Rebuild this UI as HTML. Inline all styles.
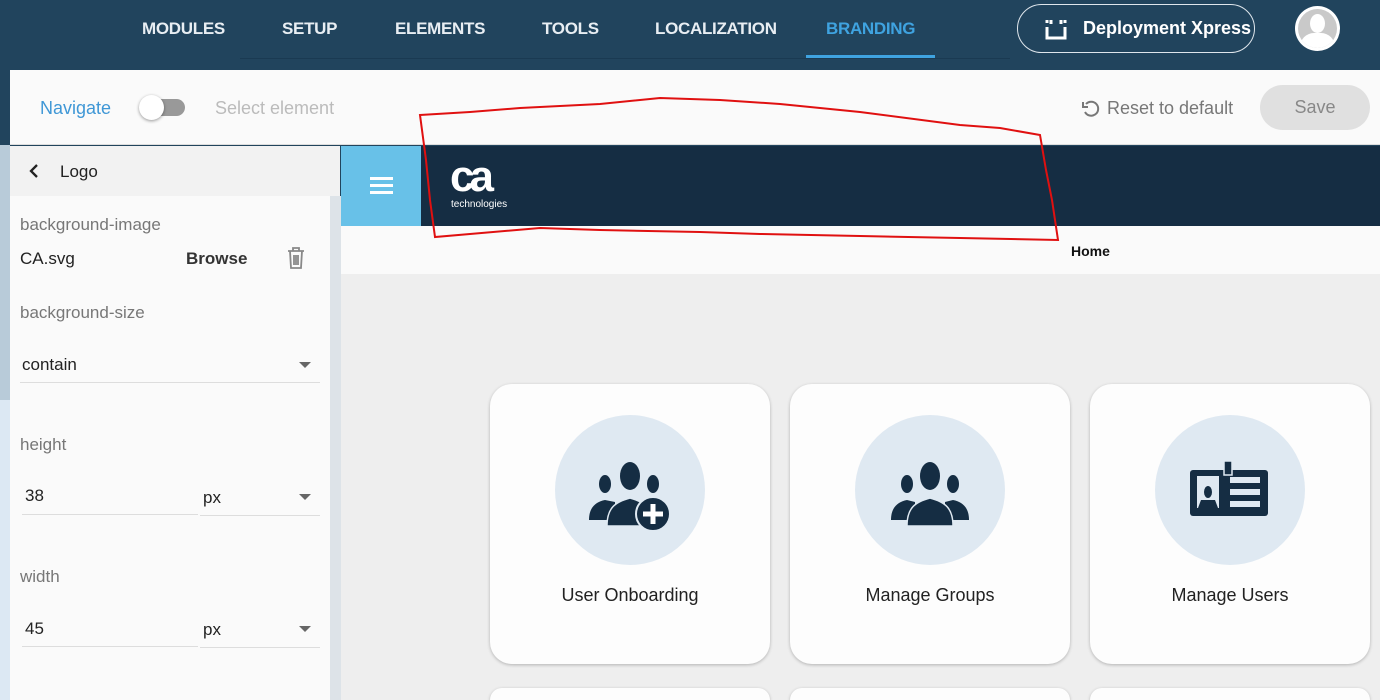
<!DOCTYPE html>
<html style="width:1380px;height:700px;overflow:hidden"><head><meta charset="utf-8"><style>
*{margin:0;padding:0;box-sizing:border-box}
body{width:1380px;height:700px;overflow:hidden;background:#21445d;font-family:"Liberation Sans",sans-serif;position:relative}
.a{position:absolute}
.nav{color:#e8eef3;font-size:17px;font-weight:bold;top:19px;letter-spacing:-0.3px}
.lbl{color:#777;font-size:17px;left:20px}
.val{color:#222;font-size:17px}
.line{height:1px;background:#ddd}
.card{background:#fdfdfd;border-radius:22px;width:280px;height:280px;top:384px;box-shadow:0 1px 3px rgba(0,0,0,.25)}
.circ{width:150px;height:150px;border-radius:50%;background:#dfe9f2;left:65px;top:31px}
.ct{width:100%;text-align:center;top:201px;font-size:18px;color:#222}
.tri{width:0;height:0;border-left:6px solid transparent;border-right:6px solid transparent;border-top:6px solid #666}
</style></head><body>
<div class="a nav" style="left:142px">MODULES</div>
<div class="a nav" style="left:282px">SETUP</div>
<div class="a nav" style="left:395px">ELEMENTS</div>
<div class="a nav" style="left:542px">TOOLS</div>
<div class="a nav" style="left:655px">LOCALIZATION</div>
<div class="a nav" style="left:826px;color:#3fa3e0">BRANDING</div>
<div class="a" style="left:240px;top:58px;width:770px;height:1px;background:#1a3a52"></div>
<div class="a" style="left:806px;top:55px;width:129px;height:3px;background:#3fa3e0"></div>
<div class="a" style="left:1017px;top:4px;width:238px;height:49px;border:1.5px solid #dfe6ec;border-radius:25px"></div>
<svg class="a" style="left:1044px;top:17px" width="24" height="24" viewBox="0 0 24 24"><path d="M3 3v3M3 10v11h18V10M21 3v3M7 3v4M17 3v4" stroke="#fff" stroke-width="3" fill="none"/></svg>
<div class="a" style="left:1083px;top:18px;color:#fff;font-weight:bold;font-size:18px">Deployment Xpress</div>
<div class="a" style="left:1295px;top:6px;width:45px;height:45px;border-radius:50%;background:#fff;overflow:hidden"><div class="a" style="left:3px;top:3px;width:39px;height:39px;border-radius:50%;background:#c9c9c9;overflow:hidden"><div class="a" style="left:12px;top:5px;width:15px;height:19px;border-radius:50%;background:#fff"></div><div class="a" style="left:2px;top:24px;width:35px;height:22px;border-radius:14px 14px 0 0;background:#fff"></div></div></div>
<div class="a" style="left:10px;top:70px;width:1370px;height:75px;background:#fafafa;border-bottom:1px solid #ddd"></div>
<div class="a" style="left:40px;top:98px;color:#3f97d6;font-size:18px">Navigate</div>
<div class="a" style="left:141px;top:99px;width:44px;height:17px;border-radius:9px;background:#999"></div>
<div class="a" style="left:139px;top:95px;width:25px;height:25px;border-radius:50%;background:#fff;box-shadow:0 1px 3px rgba(0,0,0,.4)"></div>
<div class="a" style="left:215px;top:98px;color:#bbb;font-size:18px">Select element</div>
<svg class="a" style="left:1081px;top:99px" width="20" height="20" viewBox="0 0 20 20"><path d="M5 5A7 7 0 1 1 4 13" stroke="#777" stroke-width="2" fill="none"/><path d="M2 3v5h5" stroke="#777" stroke-width="2" fill="none"/></svg>
<div class="a" style="left:1107px;top:98px;color:#777;font-size:18px">Reset to default</div>
<div class="a" style="left:1260px;top:85px;width:110px;height:45px;border-radius:23px;background:#e0e0e0;color:#888;font-size:18px;text-align:center;line-height:45px">Save</div>
<div class="a" style="left:0;top:145px;width:10px;height:255px;background:#b8cbd9"></div>
<div class="a" style="left:0;top:400px;width:10px;height:300px;background:#dce8f3"></div>
<div class="a" style="left:10px;top:146px;width:330px;height:554px;background:#fafafa"></div>
<div class="a" style="left:10px;top:146px;width:330px;height:50px;background:#f2f2f2"></div>
<div class="a" style="left:330px;top:196px;width:11px;height:504px;background:#dde3e8"></div>
<svg class="a" style="left:27px;top:163px" width="14" height="16" viewBox="0 0 14 16"><path d="M10 2L4 8l6 6" stroke="#222" stroke-width="2.3" fill="none"/></svg>
<div class="a val" style="left:60px;top:162px">Logo</div>
<div class="a lbl" style="top:215px">background-image</div>
<div class="a val" style="left:20px;top:249px">CA.svg</div>
<div class="a val" style="left:186px;top:249px;font-weight:bold;color:#333">Browse</div>
<svg class="a" style="left:285px;top:246px" width="22" height="24" viewBox="0 0 22 24"><path d="M3 5h16M8 5V2h6v3M5 5l1 17h10l1-17M9 9v10M11 9v10M13 9v10" stroke="#888" stroke-width="1.8" fill="none"/></svg>
<div class="a lbl" style="top:303px">background-size</div>
<div class="a val" style="left:22px;top:355px">contain</div>
<div class="a tri" style="left:299px;top:362px"></div>
<div class="a line" style="left:20px;top:382px;width:300px"></div>
<div class="a lbl" style="top:435px">height</div>
<div class="a val" style="left:25px;top:486px">38</div>
<div class="a line" style="left:22px;top:514px;width:176px"></div>
<div class="a val" style="left:203px;top:488px">px</div>
<div class="a tri" style="left:299px;top:494px"></div>
<div class="a line" style="left:200px;top:515px;width:120px"></div>
<div class="a lbl" style="top:567px">width</div>
<div class="a val" style="left:25px;top:619px">45</div>
<div class="a line" style="left:22px;top:646px;width:176px"></div>
<div class="a val" style="left:203px;top:620px">px</div>
<div class="a tri" style="left:299px;top:626px"></div>
<div class="a line" style="left:200px;top:647px;width:120px"></div>
<div class="a" style="left:341px;top:146px;width:1039px;height:554px;background:#eeeeee;overflow:hidden">
<div class="a" style="left:0;top:0;width:1039px;height:80px;background:#152d43"></div>
<div class="a" style="left:0;top:0;width:80px;height:80px;background:#68c1e8"></div>
<div class="a" style="left:29px;top:31px;width:23px;height:3px;background:#fff;box-shadow:0 7px 0 #fff,0 14px 0 #fff"></div>
<div class="a" style="left:109px;top:9px;color:#fff;font-size:44px;font-weight:bold;letter-spacing:-5px;line-height:44px">ca</div>
<div class="a" style="left:110px;top:53px;color:#fff;font-size:10px">technologies</div>
<div class="a" style="left:0;top:80px;width:1039px;height:48px;background:#fafafa"></div>
<div class="a" style="left:730px;top:97px;font-size:14px;font-weight:bold;color:#111">Home</div>
<div class="a card" style="left:149px;top:238px"><div class="a circ"></div><div class="a ct">User Onboarding</div>
<svg class="a" style="left:95px;top:72px" width="90" height="80" viewBox="0 0 90 80"><g fill="#152d43"><ellipse cx="20" cy="28" rx="6" ry="9"/><path d="M4 64C4 52 10 46 20 44L30 46V64Z"/><ellipse cx="68" cy="28" rx="6" ry="9"/><ellipse cx="45" cy="20" rx="10" ry="14"/><path d="M22 70C22 52 30 46 45 42C60 46 66 52 66 70Z" stroke="#dfe9f2" stroke-width="1.5"/><circle cx="68" cy="58" r="17" stroke="#dfe9f2" stroke-width="2"/></g><path d="M68 48v20M58 58h20" stroke="#fff" stroke-width="5"/></svg></div>
<div class="a card" style="left:449px;top:238px"><div class="a circ"></div><div class="a ct">Manage Groups</div>
<svg class="a" style="left:95px;top:72px" width="90" height="80" viewBox="0 0 90 80"><g fill="#152d43"><ellipse cx="22" cy="28" rx="6" ry="9"/><path d="M6 64C6 52 12 46 22 44L30 46V64Z"/><ellipse cx="68" cy="28" rx="6" ry="9"/><path d="M84 64C84 52 78 46 68 44L60 46V64Z"/><ellipse cx="45" cy="20" rx="10" ry="14"/><path d="M22 70C22 52 30 46 45 42C60 46 68 52 68 70Z" stroke="#dfe9f2" stroke-width="1.5"/></g></svg></div>
<div class="a card" style="left:749px;top:238px"><div class="a circ"></div><div class="a ct">Manage Users</div>
<svg class="a" style="left:100px;top:75px" width="80" height="60" viewBox="0 0 80 60"><rect x="0" y="11" width="78" height="46" rx="3" fill="#152d43"/><rect x="34" y="2" width="8" height="14" fill="#152d43" stroke="#dfe9f2" stroke-width="1.5"/><rect x="7" y="17" width="22" height="32" fill="#dfe9f2"/><ellipse cx="18" cy="33" rx="4" ry="6" fill="#152d43"/><path d="M8 49l3-8h14l3 8z" fill="#152d43"/><g fill="#dfe9f2"><rect x="40" y="18" width="30" height="6"/><rect x="40" y="30" width="30" height="6"/><rect x="40" y="42" width="30" height="6"/></g></svg></div>
<div class="a card" style="left:149px;top:542px;height:12px;border-radius:22px 22px 0 0"></div>
<div class="a card" style="left:449px;top:542px;height:12px;border-radius:22px 22px 0 0"></div>
<div class="a card" style="left:749px;top:542px;height:12px;border-radius:22px 22px 0 0"></div>
</div>
<svg class="a" style="left:0;top:0" width="1380" height="700"><path d="M420 115L470 112 520 108 600 104 660 98 720 100 780 104 860 112 960 125 1000 128 1040 135 1046 170 1052 200 1058 240 960 238 860 236 760 234 700 232 600 230 540 228 470 234 435 237 430 200 426 160z" stroke="#e01010" stroke-width="2" fill="none"/></svg>
</body></html>
